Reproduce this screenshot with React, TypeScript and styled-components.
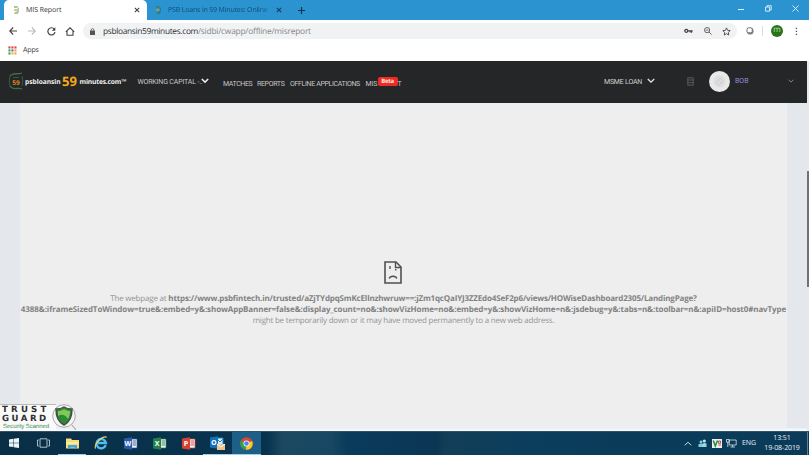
import React from "react";
import styled, { createGlobalStyle } from "styled-components";

const Global = createGlobalStyle`
  * { box-sizing: border-box; }
  html, body { margin: 0; padding: 0; overflow: hidden; }
  body { font-family: "Open Sans", "Noto Sans", sans-serif; text-rendering: geometricPrecision; }
  svg { display: block; flex: none; }
`;

const Screen = styled.div`
  width: 809px;
  height: 455px;
  display: flex;
  flex-direction: column;
  overflow: hidden;
  background: #fff;
`;

/* Keeps a text run in a slot of known width so that neighbours stay aligned. */
const Label = styled.span<{ $w: number; $size: number; $ls?: number; $c?: string; $weight?: number; $ml?: number; $font?: string; $drop?: number }>`
  flex: none;
  width: ${p => p.$w}px;
  margin-left: ${p => p.$ml ?? 0}px;
  padding-top: ${p => p.$drop ?? 0}px;
  white-space: nowrap;
  font-family: ${p => (p.$font ? `"${p.$font}", ` : "")}"Open Sans", sans-serif;
  font-size: ${p => p.$size}px;
  font-weight: ${p => p.$weight ?? 400};
  letter-spacing: ${p => p.$ls ?? 0}px;
  line-height: 12px;
  color: ${p => p.$c ?? "#333"};
`;

const Slot = styled.span<{ $ml: number }>`
  display: flex;
  flex: none;
  margin-left: ${p => p.$ml}px;
`;

/* ---------- browser chrome ---------- */
const TabStrip = styled.div`
  display: flex;
  height: 20px;
  flex: none;
  background: #2b93cf;
`;
const ActiveTab = styled.div`
  display: flex;
  align-items: center;
  width: 143px;
  height: 20px;
  margin-left: 4px;
  padding-left: 8px;
  background: #fff;
  border-radius: 5px 5px 0 0;
`;
const IdleTab = styled.div`
  display: flex;
  align-items: center;
  width: 141px;
  padding-left: 7px;
`;
const FadeText = styled.span`
  flex: none;
  width: 101px;
  margin-left: 6px;
  padding-top: 2px;
  white-space: nowrap;
  font-size: 7px;
  line-height: 12px;
  letter-spacing: -0.17px;
  color: #114d78;
  mask-image: linear-gradient(90deg, #000 90%, rgba(0, 0, 0, 0.4));
`;
const TabDivider = styled.span`
  width: 1px;
  height: 11px;
  margin-left: 7px;
  background: #1f6f9f;
`;
const TabTools = styled.div`
  display: flex;
  align-items: center;
  flex: 1;
`;
const WindowButtons = styled.div`
  display: flex;
  align-items: center;
  height: 17px;
  gap: 20px;
  padding-right: 10px;
`;
const Toolbar = styled.div`
  display: flex;
  align-items: center;
  height: 22px;
  flex: none;
`;
const AddressBar = styled.div`
  display: flex;
  align-items: center;
  width: 654px;
  height: 16px;
  margin-left: 8px;
  padding: 0 6px 0 7px;
  border-radius: 8px;
  background: #f1f2f3;
`;
const Spacer = styled.span`flex: 1;`;
const Profile = styled.span`
  width: 12px;
  height: 12px;
  margin-left: 8px;
  border-radius: 50%;
  background: #28731c;
  color: #c2e0b4;
  font-size: 8px;
  line-height: 10px;
  text-align: center;
`;
const ThinRule = styled.span`
  width: 1px;
  height: 10px;
  margin-left: 8px;
  background: #ddd;
`;
const Bookmarks = styled.div`
  display: flex;
  align-items: center;
  height: 19px;
  padding: 0 0 3px 8px;
  flex: none;
`;

/* ---------- site ---------- */
const Viewport = styled.div`
  display: flex;
  height: 370px;
  flex: none;
`;
const Page = styled.div`
  width: 807px;
  display: flex;
  flex-direction: column;
`;
const ScrollTrack = styled.div`
  width: 2px;
  padding-top: 110px;
  background: #e6e9eb;
`;
const ScrollThumb = styled.div`
  height: 116px;
  background: #707173;
`;
const SiteHeader = styled.header`
  display: flex;
  align-items: center;
  height: 42px;
  flex: none;
  padding: 0 13px 2px 8px;
  background: #252627;
`;
const Nav = styled.nav`
  display: flex;
  margin-left: 14px;
  padding-top: 4px;
`;
const Beta = styled.span`
  flex: none;
  width: 20px;
  height: 9px;
  border-radius: 2px;
  background: #f12a24;
  color: #ffe9df;
  font: 700 6px/9px "Open Sans", sans-serif;
  letter-spacing: -0.3px;
  text-align: center;
`;
const Avatar = styled.span`
  display: flex;
  align-items: center;
  justify-content: center;
  width: 21px;
  height: 21px;
  margin-left: 15px;
  border-radius: 50%;
  background: #e9e9e9;
`;
const Content = styled.main`
  position: relative;
  height: 328px;
  padding: 0 20px;
  background: #e4e7eb;
`;
const Frame = styled.section`
  height: 325px;
  display: flex;
  flex-direction: column;
  align-items: center;
  padding-top: 158px;
  background: #eeeeee;
`;
const SadPage = styled.svg`
  margin-right: 21px;
`;
const Message = styled.p`
  margin: 9px 0 0;
  display: flex;
  flex-direction: column;
  align-items: center;
`;
const Line = styled.span<{ $ls: number }>`
  white-space: nowrap;
  font-size: 8px;
  line-height: 11px;
  letter-spacing: ${p => p.$ls}px;
  color: #949494;
`;
const Strong = styled.b<{ $ls: number }>`
  font-weight: 700;
  letter-spacing: ${p => p.$ls}px;
  color: #828282;
`;
const BottomEdge = styled.div`
  height: 3px;
  margin: 0 -20px;
  background: linear-gradient(#eaf0f5, #f5faff);
`;
const TrustBadge = styled.aside`
  position: absolute;
  left: 0;
  bottom: 0;
  display: flex;
  width: 78px;
  height: 28px;
`;
const TrustText = styled.div`
  display: flex;
  flex-direction: column;
  width: 56px;
  height: 27px;
  margin-top: 1px;
  padding: 1px 0 0 2px;
  border-top: 1px solid #bbb;
  background: #fafafa;
`;
const TrustWord = styled.span<{ $ls: number }>`
  white-space: nowrap;
  font: 700 8.6px/9px "DejaVu Sans", sans-serif;
  letter-spacing: ${p => p.$ls}px;
  color: #303030;
`;
const TrustNote = styled.span`
  margin-left: 1px;
  white-space: nowrap;
  font: 400 6px/7px "Liberation Sans", sans-serif;
  letter-spacing: -0.06px;
  color: #399052;
`;
const ShieldBox = styled.div`
  margin-left: -4px;
`;

/* ---------- taskbar ---------- */
const Taskbar = styled.footer`
  display: flex;
  height: 24px;
  flex: none;
  border-top: 1px solid #345367;
  background:
    linear-gradient(90deg, #092f46 0, #08334f 33%, #1b4962 35%, #174762 41%, #0a3b5c 43%, #0a3654 54%, #123e58 55%, #0b3e5c 65%, #0a3a58 100%);
`;
const TaskItem = styled.span<{ $w: number; $open?: boolean; $active?: boolean }>`
  display: flex;
  align-items: center;
  justify-content: center;
  flex: none;
  width: ${p => p.$w}px;
  border-bottom: ${p => (p.$open ? "1px solid #9bd1ef" : "1px solid transparent")};
  background: ${p => (p.$active ? "#1e5f88" : "transparent")};
  background-clip: padding-box;
`;
const Tray = styled.div`
  display: flex;
  align-items: center;
`;
const Clock = styled.div`
  display: flex;
  flex-direction: column;
  align-items: center;
  width: 36px;
  margin-left: 7px;
  padding-top: 1px;
  font-size: 7px;
  line-height: 10px;
  letter-spacing: -0.1px;
  white-space: nowrap;
  color: #e8f0f4;
`;
const PeekEdge = styled.span`
  width: 1px;
  height: 23px;
  margin: 0 1px 0 7px;
  background: #5c7f93;
`;

const Close = ({ c }: { c: string }) => (
  <svg width="6" height="6" viewBox="0 0 6 6"><path d="M.8.8 5.2 5.2M5.2.8.8 5.2" stroke={c} strokeWidth="1.1" /></svg>
);
const Chevron = ({ w, c, s = 1.5 }: { w: number; c: string; s?: number }) => (
  <svg width={w} height={w * 0.7} viewBox="0 0 10 7"><path d="m1 1.2 4 4 4-4" fill="none" stroke={c} strokeWidth={s} /></svg>
);
const Favicon = ({ dim }: { dim?: boolean }) => (
  <svg width="8" height="10" viewBox="0 0 8 10" opacity={dim ? 0.8 : 1}>
    <path d="M2 1h4L5 3H2zM3 7l3-1v3H2z" fill={dim ? "#397f65" : "#a6c7a0"} />
    <path d="M2 4h4l-.5 2H2z" fill={dim ? "#ae9e4b" : "#d4cf80"} />
    <path d="M6.2 2.5v5" stroke={dim ? "#246974" : "#99a59b"} />
  </svg>
);
const appColors = ["#e94335", "#e94335", "#e94335", "#34a853", "#566bd0", "#e9a335", "#34a853", "#e9b535", "#e9a335"];
const Office = ({ letter, c }: { letter: string; c: string }) => (
  <svg width="14" height="13" viewBox="0 0 14 13">
    <path d="M7 2h6v9H7z" fill="#f5f5f5" stroke={c} strokeWidth=".7" />
    <path d="M8.5 4H12M8.5 6H12M8.5 8H12" stroke={c} strokeWidth=".9" />
    <path d="m0 1.5 8-1.2v12.4l-8-1.2z" fill={c} />
    <text x="4" y="9" textAnchor="middle" fontFamily="Open Sans" fontWeight="700" fontSize="7" fill="#fff">{letter}</text>
  </svg>
);

export default function App() {
  return (
    <Screen>
      <Global />
      <TabStrip>
        <ActiveTab>
          <Favicon />
          <Label $ml={6} $w={36} $size={7} $ls={-0.06} $drop={2}>MIS Report</Label>
          <Slot $ml={72}><Close c="#444" /></Slot>
        </ActiveTab>
        <IdleTab>
          <Favicon dim />
          <FadeText>PSB Loans in 59 Minutes: Online</FadeText>
          <Slot $ml={7}><Close c="#123f63" /></Slot>
          <TabDivider />
        </IdleTab>
        <TabTools>
          <Slot $ml={10}>
            <svg width="7" height="7" viewBox="0 0 7 7"><path d="M3.5 0v7M0 3.5h7" stroke="#0d3350" strokeWidth="1.2" /></svg>
          </Slot>
        </TabTools>
        <WindowButtons>
          <svg width="7" height="6" viewBox="0 0 7 6"><path d="M0 3.5h6" stroke="#e6f3fb" /></svg>
          <svg width="7" height="7" viewBox="0 0 7 7"><path d="M.6 2h4v4.2h-4zM2 2V.7h4.2v4.2H4.8" fill="none" stroke="#e6f3fb" strokeWidth=".9" /></svg>
          <svg width="7" height="7" viewBox="0 0 7 7"><path d="m.5.5 6 6m0-6-6 6" stroke="#e6f3fb" strokeWidth=".9" /></svg>
        </WindowButtons>
      </TabStrip>

      <Toolbar>
        <Slot $ml={9}><svg width="8" height="8" viewBox="0 0 8 8"><path d="M8 4H1M4.2.5.7 4l3.5 3.5" fill="none" stroke="#444" strokeWidth="1.1" /></svg></Slot>
        <Slot $ml={11}><svg width="8" height="8" viewBox="0 0 8 8"><path d="M0 4h7M3.8.5 7.3 4 3.8 7.5" fill="none" stroke="#bbb" strokeWidth="1.1" /></svg></Slot>
        <Slot $ml={11}><svg width="9" height="9" viewBox="0 0 9 9"><path d="M7.3 2.1A3.6 3.6 0 1 0 8 5.2" fill="none" stroke="#444" strokeWidth="1.2" /><path d="M8.3.3v3.5H4.8z" fill="#444" /></svg></Slot>
        <Slot $ml={9}><svg width="10" height="9" viewBox="0 0 10 9"><path d="M.8 4.8 5 .8l4.2 4M2 4v4.2h6V4" fill="none" stroke="#444" strokeWidth="1.1" /></svg></Slot>
        <AddressBar>
          <svg width="5" height="7" viewBox="0 0 5 7"><path d="M0 2.6h5V7H0z" fill="#555" /><path d="M1.2 3V1.9a1.3 1.3 0 0 1 2.6 0V3" fill="none" stroke="#555" strokeWidth=".8" /></svg>
          <Label $ml={8} $w={95} $size={8.4} $ls={-0.34} $drop={1} $c="#303338">psbloansin59minutes.com</Label>
          <Label $w={114} $size={8.4} $ls={-0.22} $drop={1} $c="#85888c">/sidbi/cwapp/offline/misreport</Label>
          <Spacer />
          <svg width="9" height="6" viewBox="0 0 9 6"><circle cx="2.3" cy="2.8" r="1.5" fill="none" stroke="#444" strokeWidth="1.3" /><path d="M4 2.8h4.7M7.6 2.8v2M6.1 2.8v1.7" stroke="#444" strokeWidth="1.2" /></svg>
          <Slot $ml={11}><svg width="8" height="8" viewBox="0 0 8 8"><circle cx="3.1" cy="3.1" r="2.6" fill="none" stroke="#555" strokeWidth=".9" /><path d="m5 5 2.6 2.6M1.8 3.1h2.6" stroke="#555" strokeWidth=".9" /></svg></Slot>
          <Slot $ml={10}><svg width="9" height="9" viewBox="0 0 9 9"><path d="m4.5.9 1.1 2.4 2.6.3-1.9 1.8.5 2.6-2.3-1.3L2.2 8l.5-2.6L.8 3.6l2.6-.3z" fill="none" stroke="#444" strokeWidth=".9" /></svg></Slot>
        </AddressBar>
        <Slot $ml={9}><svg width="8" height="8" viewBox="0 0 8 8"><circle cx="4.2" cy="4.2" r="3.4" fill="#888" /><rect x="1" y=".8" width="5.2" height="5" rx="1.5" fill="#fff" stroke="#555" strokeWidth=".8" /></svg></Slot>
        <ThinRule />
        <Profile>m</Profile>
        <Slot $ml={12}><svg width="3" height="9" viewBox="0 0 3 9"><path d="M.8.8h1.3v1.3H.8zM.8 3.8h1.3v1.3H.8zM.8 6.8h1.3v1.3H.8z" fill="#555" /></svg></Slot>
      </Toolbar>

      <Bookmarks>
        <svg width="9" height="9" viewBox="0 0 9 9">
          {appColors.map((c, i) => <rect key={i} x={0.4 + (i % 3) * 3} y={0.4 + Math.floor(i / 3) * 3} width="2.1" height="2.1" fill={c} />)}
        </svg>
        <Label $ml={6} $w={20} $size={7} $ls={-0.15} $drop={1}>Apps</Label>
      </Bookmarks>

      <Viewport>
        <Page>
          <SiteHeader>
            <svg width="16" height="20" viewBox="0 0 16 20">
              <path d="M2 5c3-4 8-1 12-3M2 15c3 5 8 1 12 3" fill="none" stroke="#3f7045" strokeWidth="1.3" />
              <path d="M2 5q-1.5 5 0 10M14 5q1.5 5 0 10" fill="none" stroke="#44594a" strokeWidth=".9" />
              <path d="M5 6.5h6" stroke="#355b40" />
              <text x="8" y="13.5" textAnchor="middle" fontFamily="Open Sans" fontSize="6.5" fontWeight="700" fill="#dc861d">59</text>
            </svg>
            <Label $ml={1} $w={37} $size={6.7} $ls={-0.05} $weight={700} $drop={1} $c="#f0f0f0">psbloansin</Label>
            <Label $w={17.5} $size={13} $weight={700} $c="#f9a719">59</Label>
            <Label $w={44.5} $size={6.7} $ls={-0.18} $weight={700} $drop={1} $c="#f0f0f0">minutes.com™</Label>
            <Label $ml={13.5} $w={64} $size={7} $ls={-0.16} $font="Roboto" $drop={1} $c="#c9c9c9">WORKING CAPITAL -..</Label>
            <Slot $ml={-0.5}><Chevron w={8} c="#ededed" s={1.9} /></Slot>
            <Nav>
              <Label $w={34} $size={7} $ls={-0.4} $font="Roboto" $drop={1} $c="#c5c5c5">MATCHES</Label>
              <Label $w={33} $size={7} $ls={-0.34} $font="Roboto" $drop={1} $c="#c5c5c5">REPORTS</Label>
              <Label $w={75.5} $size={7} $ls={-0.34} $font="Roboto" $drop={1} $c="#c5c5c5">OFFLINE APPLICATIONS</Label>
              <Label $w={12} $size={7} $ls={-0.1} $font="Roboto" $drop={1} $c="#c5c5c5">MIS</Label>
              <Beta>Beta</Beta>
              <Label $w={4} $size={7} $font="Roboto" $drop={1} $c="#c5c5c5">T</Label>
            </Nav>
            <Spacer />
            <Label $w={43} $size={7} $ls={-0.2} $font="Roboto" $drop={1} $c="#d0d0d0">MSME LOAN</Label>
            <Chevron w={8} c="#e6e6e6" s={1.6} />
            <Slot $ml={32}><svg width="7" height="9" viewBox="0 0 7 9"><path d="M.8.8h5.4v7.4H.8zM.5 3h6M.5 5.7h6" fill="none" stroke="#5a5a5a" strokeWidth="1" /></svg></Slot>
            <Avatar><svg width="15" height="15" viewBox="0 0 15 15"><circle cx="7.5" cy="7.5" r="6" fill="#dedede" /><path d="m4 8 4-4 3 3-4 4zM6 5l4 5" fill="none" stroke="#d0d0d0" /></svg></Avatar>
            <Label $ml={5} $w={53} $size={7} $font="Roboto" $c="#8f8dda">BOB</Label>
            <Chevron w={6} c="#929292" />
          </SiteHeader>
          <Content>
            <Frame>
              <SadPage width="18" height="23" viewBox="0 0 18 23">
                <path d="M1 1h11l5 5v16H1z" fill="none" stroke="#505050" strokeWidth="1.6" />
                <path d="M11.5 1v5.5H17" fill="none" stroke="#505050" strokeWidth="1.4" />
                <path d="M6 5v3M11.7 8v1.6" stroke="#555" strokeWidth="1.4" />
                <path d="M5.2 17.5c1-3 6.6-3 7.6 0" fill="none" stroke="#505050" strokeWidth="1.4" />
              </SadPage>
              <Message>
                <Line $ls={-0.2}>The webpage at <Strong $ls={-0.17}>https://www.psbfintech.in/trusted/aZjTYdpqSmKcEllnzhwruw==:jZm1qcQaIYJ3ZZEdo4SeF2p6/views/HOWiseDashboard2305/LandingPage?</Strong></Line>
                <Line $ls={0}><Strong $ls={-0.1}>4388&amp;:iframeSizedToWindow=true&amp;:embed=y&amp;:showAppBanner=false&amp;:display_count=no&amp;:showVizHome=no&amp;:embed=y&amp;:showVizHome=n&amp;:jsdebug=y&amp;:tabs=n&amp;:toolbar=n&amp;:apiID=host0#navType</Strong></Line>
                <Line $ls={-0.22}>might be temporarily down or it may have moved permanently to a new web address.</Line>
              </Message>
            </Frame>
            <BottomEdge />
            <TrustBadge>
              <TrustText>
                <TrustWord $ls={3.2}>TRUST</TrustWord>
                <TrustWord $ls={2.5}>GUARD</TrustWord>
                <TrustNote>Security Scanned</TrustNote>
              </TrustText>
              <ShieldBox>
                <svg width="26" height="28" viewBox="0 0 26 28">
                  <path d="m20 22 4 5" stroke="#aaa" strokeWidth="1.2" />
                  <circle cx="12" cy="13" r="11.3" fill="#f4f4f4" stroke="#a2a2a2" strokeWidth=".9" />
                  <path d="M12 4c3 2 5 2 8 2 0 8-2 13-8 16C6 19 4 14 4 6c3 0 5 0 8-2z" fill="#298c32" stroke="#4b4d4b" strokeWidth="1.5" />
                  <path d="M12 6c2 1.5 4 2 6 2 0 4-1 6-2 8-3-5-7-5-10-3V8c2 0 4-.5 6-2z" fill="#82c75a" />
                </svg>
              </ShieldBox>
            </TrustBadge>
          </Content>
        </Page>
        <ScrollTrack><ScrollThumb /></ScrollTrack>
      </Viewport>

      <Taskbar>
        <TaskItem $w={28}><svg width="10" height="10" viewBox="0 0 10 10"><path d="m0 1.4 4.3-.6v3.9H0zM4.8.7 10 0v4.7H4.8zM0 5.2h4.3v3.9L0 8.5zM4.8 5.2H10v4.7l-5.2-.7z" fill="#eef5f8" /></svg></TaskItem>
        <TaskItem $w={30}><svg width="13" height="10" viewBox="0 0 13 10"><path d="M3 .8h7v8.4H3zM1.8 2H.5v6h1.3M11.2 2h1.3v6h-1.3" fill="none" stroke="#d3e0e6" strokeWidth=".8" /></svg></TaskItem>
        <TaskItem $w={28} $open><svg width="13" height="11" viewBox="0 0 13 11"><path d="M0 .5h5l1 1.5h7v8.5H0z" fill="#f7dc7c" /><path d="M0 4h13v2H0z" fill="#fae99f" /><path d="M2 10.5V7h9v3.5H8.5v-1h-4v1z" fill="#43a6db" /></svg></TaskItem>
        <TaskItem $w={30}>
          <svg width="14" height="14" viewBox="0 0 14 14"><path d="M11.7 9.2A4.7 4.7 0 1 1 11.9 7H4" fill="none" stroke="#50bdee" strokeWidth="2.4" /><path d="M1.6 12.6C-.4 8.5 8-.6 12.8 1.2" fill="none" stroke="#f3d464" strokeWidth="1.1" /></svg>
        </TaskItem>
        <TaskItem $w={29}><Office letter="W" c="#2b5aa8" /></TaskItem>
        <TaskItem $w={29}><Office letter="X" c="#23804a" /></TaskItem>
        <TaskItem $w={29}><Office letter="P" c="#d64130" /></TaskItem>
        <TaskItem $w={29} $open>
          <svg width="15" height="14" viewBox="0 0 15 14"><path d="M7 2h6v7H7z" fill="#d9effa" stroke="#237dc1" /><path d="m7 3 3 3 3-3" fill="none" stroke="#237dc1" /><path d="m0 1.5 8-1.2v12.4l-8-1.2z" fill="#1472bd" /><circle cx="4" cy="6.5" r="1.9" fill="none" stroke="#fff" strokeWidth="1.2" /><path d="M7 8h8v6H7z" fill="#eec28b" /><path d="m7 8 4 3 4-3" fill="none" stroke="#fff" /></svg>
        </TaskItem>
        <TaskItem $w={29} $open $active>
          <svg width="13" height="13" viewBox="0 0 13 13"><circle cx="6.5" cy="6.5" r="6.3" fill="#db4437" /><path d="M6.5 6.5 1 3.4a6.3 6.3 0 0 0 5 9.4z" fill="#30a254" /><path d="M6.5 6.5 12.2 4A6.3 6.3 0 0 1 6 12.8z" fill="#fbc928" /><circle cx="6.5" cy="6.5" r="3" fill="#fff" /><circle cx="6.5" cy="6.5" r="2.3" fill="#4285f4" /></svg>
        </TaskItem>
        <Spacer />
        <Tray>
          <svg width="8" height="5" viewBox="0 0 8 5"><path d="m.7 4.3 3.3-3 3.3 3" fill="none" stroke="#dce7ec" strokeWidth=".9" /></svg>
          <Slot $ml={6}><svg width="9" height="9" viewBox="0 0 9 9"><circle cx="3" cy="3" r="1.4" fill="#81ccde" /><path d="M.5 8V5.3q2.5-1.8 5 0V8z" fill="#81ccde" /><circle cx="6.3" cy="2" r="1.6" fill="#c1e7e8" /><path d="M4.5 8V4.6q2-1.3 4 0V8z" fill="#9bd9df" /></svg></Slot>
          <Slot $ml={5}><svg width="10" height="9" viewBox="0 0 10 9"><path d="M0 0h10v9H0z" fill="#eee" /><path d="m1.3 1.5 2 5.5L5.5 1.5" fill="none" stroke="#298b37" strokeWidth="1.5" /><path d="M6.5 2h2v2.3h-2zM6.5 6h2.5" fill="none" stroke="#c45050" /></svg></Slot>
          <Slot $ml={4}><svg width="11" height="9" viewBox="0 0 11 9"><path d="M3.2 1h7v5h-7zM6.7 6v2M4.5 8h4.5M.5.5h2.7v2.7H.5zM1.8 3v5" fill="none" stroke="#d8e5eb" strokeWidth=".8" /></svg></Slot>
          <Label $ml={5} $w={15} $size={7} $ls={-0.1} $drop={1} $c="#e8f0f4">ENG</Label>
          <Clock><span>13:51</span><span>19-08-2019</span></Clock>
          <PeekEdge />
        </Tray>
      </Taskbar>
    </Screen>
  );
}
